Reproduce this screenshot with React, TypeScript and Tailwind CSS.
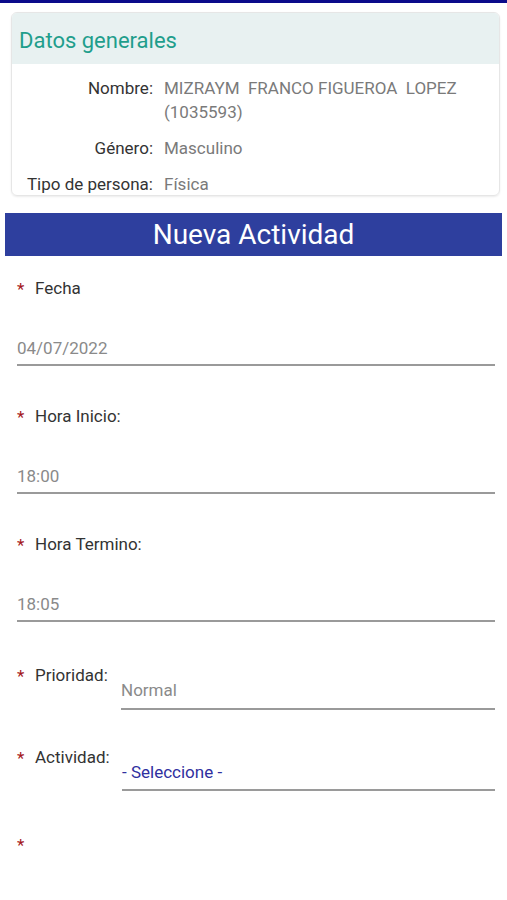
import React from "react";

const ROBOTO = { fontFamily: "Roboto, 'Noto Sans', sans-serif" };

function Star() {
  return <span className="text-[#a31621] text-[17px] leading-none w-[18px] shrink-0">*</span>;
}

function InfoRow({ label, children }: { label: string; children: React.ReactNode }) {
  return (
    <div className="flex gap-[11px] text-[17px] leading-[24px]">
      <div className="w-[141px] shrink-0 text-right text-[#333] whitespace-nowrap">{label}</div>
      <div className="text-[#7a7a7a]">{children}</div>
    </div>
  );
}

function TextField({ label, value }: { label: string; value: string }) {
  return (
    <div className="flex flex-col">
      <div className="flex items-center h-[24px] text-[17px] text-[#333]">
        <Star />
        {label}
      </div>
      <div className="mt-[35px] pb-[4px] border-b-2 border-[#9a9a9a] text-[17px] leading-[24px] text-[#8a8a8a]">
        {value}
      </div>
    </div>
  );
}

export default function App() {
  return (
    <div className="w-[507px] min-h-[900px] bg-white overflow-hidden" style={ROBOTO}>
      <div className="h-[3px] bg-[#0b0b8a]" />

      {/* Datos generales card */}
      <div className="mx-[11px] mt-[9px] w-[489px] h-[184px] rounded-[6px] border border-[#e6e6e6] shadow-[0_1px_2px_rgba(0,0,0,0.08)] overflow-hidden">
        <div className="h-[51px] bg-[#e8f1f1] flex items-center px-[7px] pt-[3px]">
          <span className="text-[22px] text-[#1f9e8c]">Datos generales</span>
        </div>
        <div className="flex flex-col gap-[12px] pt-[12px]">
          <InfoRow label="Nombre:">
            MIZRAYM&nbsp; FRANCO FIGUEROA&nbsp; LOPEZ
            <br />
            (1035593)
          </InfoRow>
          <InfoRow label="Género:">Masculino</InfoRow>
          <InfoRow label="Tipo de persona:">Física</InfoRow>
        </div>
      </div>

      {/* Nueva Actividad */}
      <div className="mx-[5px] mt-[17px] h-[43px] bg-[#2e3f9e] flex items-center justify-center">
        <span className="text-[28px] text-white">Nueva Actividad</span>
      </div>

      <div className="px-[17px] pr-[12px] pt-[21px] flex flex-col gap-[39px]">
        <TextField label="Fecha" value="04/07/2022" />
        <TextField label="Hora Inicio:" value="18:00" />
        <TextField label="Hora Termino:" value="18:05" />

        <div className="flex mt-[3px]">
          <div className="w-[104px] shrink-0 flex items-center h-[24px] text-[17px] text-[#333]">
            <Star />
            Prioridad:
          </div>
          <div className="flex-1 mt-[14px] pb-[6px] border-b-2 border-[#9a9a9a] text-[17px] leading-[24px] text-[#8a8a8a]">
            Normal
          </div>
        </div>

        <div className="flex -mt-[3px]">
          <div className="w-[105px] shrink-0 flex items-center h-[24px] text-[17px] text-[#333]">
            <Star />
            Actividad:
          </div>
          <div className="flex-1 mt-[14px] pb-[5px] border-b-2 border-[#9a9a9a] text-[17px] leading-[24px] text-[#3030a0]">
            - Seleccione -
          </div>
        </div>

        <div className="flex items-center h-[24px] mt-[3px]">
          <Star />
        </div>
      </div>
    </div>
  );
}
